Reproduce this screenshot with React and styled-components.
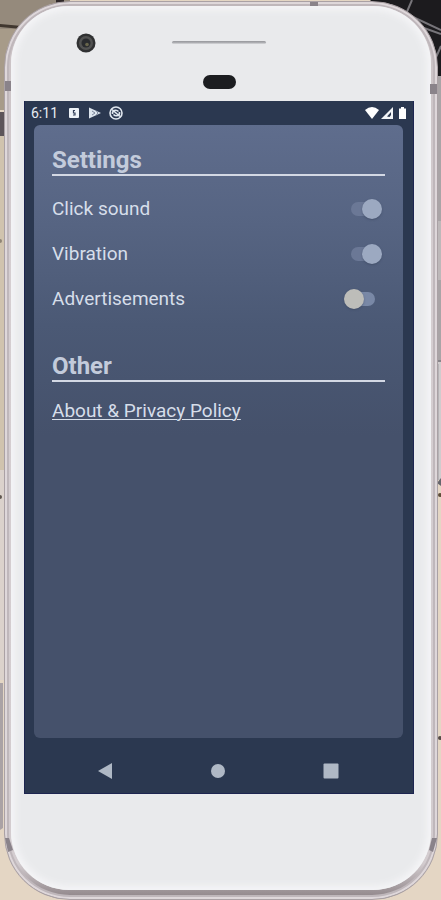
import React, { useState } from 'react';
import styled, { createGlobalStyle } from 'styled-components';

const GlobalStyle = createGlobalStyle`
  *, *::before, *::after { box-sizing: border-box; }
  body { margin: 0; font-family: Roboto, "Liberation Sans", sans-serif; }
`;

const Desk = styled.div`
  position: relative;
  display: flex;
  min-height: 100vh;
  padding: 1px 3px 0 4px;
  overflow: hidden;
  background: #e4d6c4;
`;

const Backdrop = styled.svg`
  position: absolute;
  inset: 0;
  width: 100%;
  height: 100%;
`;

const Shell = styled.div`
  position: relative;
  display: flex;
  flex: 1;
  padding: 4px 6px 9px;
  border: 1px solid #aaa1a5;
  border-radius: 66px;
  background: linear-gradient(180deg, #c9c1c4, #d5ced1 30%, #d3cccf 96%, #8d8387);
  box-shadow: inset 0 0 0 2px #ded7da, inset 0 0 0 4px #bfb7bb;
`;

const Marks = styled.svg`
  position: absolute;
  inset: 0;
  width: 100%;
  height: 100%;
`;

const Face = styled.div`
  display: flex;
  flex-direction: column;
  flex: 1;
  padding: 0 17px 96px 13px;
  border-radius: 58px;
  background: #e9eaec;
  box-shadow: inset 0 0 7px 4px #f5f5f7;
`;

const Sensors = styled.div`
  display: grid;
  grid-template-columns: 1fr 94px 1fr;
  height: 95px;
  padding-top: 27px;
`;

const Camera = styled.svg`
  width: 20px;
  height: 20px;
  margin-left: 52px;
`;

const Earpiece = styled.div`
  display: flex;
  flex-direction: column;
  align-items: center;
  gap: 31px;
  padding-top: 8px;
`;

const Speaker = styled.div`
  width: 100%;
  height: 3px;
  border-radius: 2px;
  background: linear-gradient(#96979b, #b0b1b5 60%, #dcdde0);
`;

const Proximity = styled.div`
  width: 33px;
  height: 14px;
  border-radius: 7px;
  background: #1c1d20;
`;

const Screen = styled.div`
  display: flex;
  flex-direction: column;
  flex: 1;
  border: solid #1d2550;
  border-width: 0 1px 1px;
  background: #2b3850;
`;

const StatusBar = styled.div`
  display: flex;
  align-items: center;
  justify-content: space-between;
  height: 24px;
  padding: 0 6px;
  color: #e6ebf2;
  font-size: 14px;
  line-height: 16px;
`;

const StatusGroup = styled.div`
  display: flex;
  align-items: center;
`;

const Notices = styled.svg`
  width: 56px;
  height: 16px;
  margin-left: 9px;
`;

const Signals = styled.svg`
  width: 43px;
  height: 16px;
`;

const Card = styled.main`
  flex: 1;
  margin: 0 10px 0 9px;
  padding: 21px 18px;
  border-radius: 6px;
  background: linear-gradient(180deg, #5f6d8d 0, #566482 100px, #4b5975 200px, #45516b 310px, #45516b 100%);
`;

const Section = styled.section`
  margin-bottom: 31px;
`;

const Heading = styled.h2`
  margin: 0 0 10px;
  border-bottom: 2px solid #d3d8e4;
  color: #c3cbdb;
  font-size: 24px;
  font-weight: 700;
  line-height: 28px;
`;

const Row = styled.label`
  display: flex;
  align-items: center;
  justify-content: space-between;
  height: 45px;
  padding-right: 3px;
  color: #d6deea;
  font-size: 19px;
  line-height: 24px;
`;

const Switch = styled.input`
  position: relative;
  appearance: none;
  width: 38px;
  height: 20px;
  margin: 0;

  &::before {
    content: "";
    position: absolute;
    top: 3px;
    left: 7px;
    width: 24px;
    height: 14px;
    border-radius: 7px;
    background: #7988a6;
  }

  &::after {
    content: "";
    position: absolute;
    top: 0;
    left: 0;
    width: 20px;
    height: 20px;
    border-radius: 50%;
    background: #bdbdb9;
    box-shadow: 0 1px 2px #35415a80;
  }

  &:checked::before { background: #6b7896; }
  &:checked::after { left: 18px; background: #9ca9c1; }
`;

const PolicyLink = styled.a`
  color: #d6deea;
  font-size: 19px;
  line-height: 38px;
  text-decoration: underline;
  text-decoration-thickness: 1px;
  text-underline-offset: 2px;
`;

const NavBar = styled.nav`
  display: grid;
  grid-template-columns: repeat(3, 1fr);
  height: 55px;
  padding: 10px 26px 0 24px;
`;

const NavButton = styled.button`
  display: flex;
  align-items: center;
  justify-content: center;
  padding: 0;
  border: 0;
  background: none;
  color: #afb8c5;
`;

function Desktop() {
  return (
    <Backdrop aria-hidden="true" viewBox="0 0 441 900" preserveAspectRatio="none">
      <path d="M0 0H70V90H0z" fill="#958a7c" />
      <path d="M0 24L22 26V29L0 27z" fill="#40372f" />
      <path d="M56 0H64V3H56z" fill="#30292a" />
      <path d="M0 29H18L8 110H0z" fill="#a79b89" />
      <path d="M0 112H4V136H0z" fill="#5d555a" />
      <path d="M0 136H5V470H0z" fill="#d0c3ae" />
      <path d="M0 470H5V680H0z" fill="#dbd2cc" />
      <circle cx="0" cy="241" r="2" fill="#8e8474" />
      <circle cx="0" cy="497" r="2" fill="#5e564e" />
      <path d="M370 0H441V82L430 60z" fill="#1c1b1e" />
      <path d="M412 0L406 14M396 9L441 30M424 28L441 34M434 62L441 46" stroke="#77757a" strokeWidth="2" />
      <path d="M433 76H441V360H433z" fill="#a9a4a6" />
      <path d="M433 221H441V280H433z" fill="#bdb8b9" />
      <path d="M433 360H441V480H433z" fill="#d0cccd" />
      <path d="M437 361H441" stroke="#88858a" strokeWidth="2" />
      <path d="M438 364V480" stroke="#9a999f" />
      <path d="M437 483L441 478V486z" fill="#65656c" />
      <circle cx="440" cy="495" r="2" fill="#5d4c38" />
      <circle cx="440" cy="738" r="2" fill="#544a46" />
      <path d="M0 683H3V828L0 830z" fill="#aaa2a5" />
    </Backdrop>
  );
}

function ShellMarks() {
  return (
    <Marks aria-hidden="true" viewBox="0 0 432 897" preserveAspectRatio="none">
      <path d="M305 0H313V4H305zM0 79H6V89H0zM425 82H432V92H425zM0 836L4 836L8 848L3 850zM427 836H432L428 850L424 848z" fill="#8a838a" />
    </Marks>
  );
}

function PhoneCamera() {
  return (
    <Camera aria-hidden="true" viewBox="0 0 20 20">
      <circle cx="10" cy="10" r="9.5" fill="#303132" />
      <circle cx="10" cy="10" r="7" fill="#525352" />
      <circle cx="10" cy="10" r="4.5" fill="#292b2e" />
      <circle cx="11" cy="11.5" r="1.8" fill="#68654c" />
    </Camera>
  );
}

function NoticeIcons() {
  return (
    <Notices aria-hidden="true" viewBox="0 0 56 16" fill="none">
      <rect x="2" y="3" width="10" height="10" rx="1" fill="#edf2f7" />
      <path d="M8 5.5H6.5V8H8V10H6" stroke="#34415b" strokeWidth="1.2" />
      <path d="M22 2.5L34 8L22 13.5z" fill="#dce4ed" />
      <path d="M25 6L28 8L25 10M29 5.5L31 8L29 10.5" stroke="#7c879c" />
      <circle cx="49" cy="8" r="6" stroke="#e1e7ef" strokeWidth="1.6" />
      <path d="M45.5 9C45 5.5 49 4 51.5 6.5M52.5 7C53 10.5 49 12 46.5 9.5M45 4.5L53 11.5" stroke="#e1e7ef" strokeWidth="1.6" />
    </Notices>
  );
}

function SignalIcons() {
  return (
    <Signals aria-hidden="true" viewBox="0 0 43 16">
      <path d="M1 5Q8 -1 15 5L8 14z" fill="#fff" />
      <path d="M17 14L29 2V14z" fill="#f3f5f8" />
      <path d="M23 11.5L27 7V10L25.5 12z" fill="#2b3850" />
      <path d="M35 3.5H37V2H40V3.5H42V14H35z" fill="#fff" />
    </Signals>
  );
}

const initialOptions = [
  { name: 'Click sound', on: true },
  { name: 'Vibration', on: true },
  { name: 'Advertisements', on: false },
];

export default function App() {
  const [options, setOptions] = useState(initialOptions);
  const toggle = (name) =>
    setOptions(options.map((o) => (o.name === name ? { ...o, on: !o.on } : o)));

  return (
    <>
      <GlobalStyle />
      <Desk>
        <Desktop />
        <Shell>
          <ShellMarks />
          <Face>
            <Sensors>
              <PhoneCamera />
              <Earpiece>
                <Speaker />
                <Proximity />
              </Earpiece>
            </Sensors>
            <Screen>
              <StatusBar>
                <StatusGroup>
                  <span>6:11</span>
                  <NoticeIcons />
                </StatusGroup>
                <SignalIcons />
              </StatusBar>
              <Card>
                <Section>
                  <Heading>Settings</Heading>
                  {options.map((o) => (
                    <Row key={o.name}>
                      {o.name}
                      <Switch type="checkbox" role="switch" checked={o.on} onChange={() => toggle(o.name)} />
                    </Row>
                  ))}
                </Section>
                <Section>
                  <Heading>Other</Heading>
                  <PolicyLink href="#privacy">About &amp; Privacy Policy</PolicyLink>
                </Section>
              </Card>
              <NavBar>
                <NavButton type="button" aria-label="Back">
                  <svg width="16" height="18" viewBox="0 0 16 18"><path d="M1 9L15 1V17z" fill="currentColor" /></svg>
                </NavButton>
                <NavButton type="button" aria-label="Home">
                  <svg width="16" height="16" viewBox="0 0 16 16"><circle cx="8" cy="8" r="7" fill="currentColor" /></svg>
                </NavButton>
                <NavButton type="button" aria-label="Recent apps">
                  <svg width="16" height="16" viewBox="0 0 16 16"><rect x=".5" y=".5" width="15" height="15" rx="1" fill="currentColor" /></svg>
                </NavButton>
              </NavBar>
            </Screen>
          </Face>
        </Shell>
      </Desk>
    </>
  );
}
